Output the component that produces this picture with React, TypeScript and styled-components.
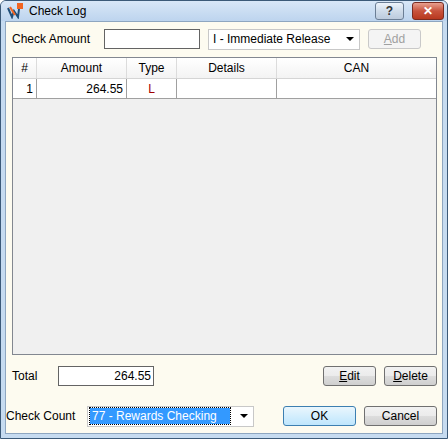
import React from "react";
import styled, { createGlobalStyle } from "styled-components";

const G = createGlobalStyle`
  body { margin: 0; font-family: "Liberation Sans", Arial, sans-serif; font-size: 12px; }
`;
const Win = styled.div`
  width: 448px; height: 439px; box-sizing: border-box;
  border: 1px solid #3c5a78; border-radius: 6px 6px 0 0;
  background: #c6dbf0; display: flex; flex-direction: column; overflow: hidden;
`;
const Title = styled.div`
  height: 25px; display: flex; align-items: center; padding: 0 3px 0 6px; gap: 6px;
  background: linear-gradient(#d8e7f7, #bdd4ee); font-size: 12px; color: #000;
`;
const Spacer = styled.div` flex: 1; `;
const TBtn = styled.div<{ red?: boolean }>`
  width: ${p => (p.red ? 32 : 29)}px; height: 18px; box-sizing: border-box;
  border: 1px solid ${p => (p.red ? "#7a2b20" : "#6b7e95")}; border-radius: 3px;
  background: ${p => (p.red ? "linear-gradient(#e8a08f,#c8533d 50%,#b8381f)" : "linear-gradient(#eef4fb,#cfdcea 50%,#bccbdd)")};
  display: flex; align-items: center; justify-content: center;
  color: ${p => (p.red ? "#fff" : "#333")}; font-weight: bold; font-size: 12px; margin-left: 2px;
`;
const Body = styled.div`
  flex: 1; margin: 0 4px 4px 4px; background: #fdfbf0; border: 1px solid #8ea6c0;
  display: flex; flex-direction: column; padding: 6px 5px 6px 0;
`;
const Row = styled.div<{ h: number }>`
  display: flex; align-items: center; height: ${p => p.h}px;
`;
const Label = styled.span<{ w: number }>` width: ${p => p.w}px; padding-left: 6px; box-sizing: border-box; font-size: 12px; `;
const Input = styled.div<{ w: number }>`
  width: ${p => p.w}px; height: 20px; box-sizing: border-box; border: 1px solid #646464; background: #fff;
  text-align: right; padding: 2px 2px 0 0; font-size: 12px;
`;
const Select = styled.div<{ w: number }>`
  width: ${p => p.w}px; height: 21px; box-sizing: border-box; border: 1px solid #c8c8c8; background: #fff;
  display: flex; align-items: center; padding: 0 5px 0 2px; font-size: 12px;
`;
const SelText = styled.span<{ sel?: boolean }>`
  flex: 1; padding: 1px 2px; ${p => p.sel && "background:#3399ff;color:#fff;outline:1px dotted #000;margin-right:10px;"}
`;
const Arrow = styled.span` width:0;height:0;border-left:4px solid transparent;border-right:4px solid transparent;border-top:4px solid #000; `;
const Btn = styled.div<{ w: number; dis?: boolean; def?: boolean }>`
  width: ${p => p.w}px; height: 20px; box-sizing: border-box; border-radius: 3px;
  border: 1px solid ${p => (p.dis ? "#c9c9c9" : p.def ? "#3c7fb1" : "#707070")};
  background: ${p => (p.dis ? "#f4f4f4" : p.def ? "linear-gradient(#eaf6fd,#bee6fd)" : "linear-gradient(#f2f2f2,#ebebeb 50%,#dddddd 51%,#cfcfcf)")};
  color: ${p => (p.dis ? "#a0a0a0" : "#000")}; display:flex;align-items:center;justify-content:center; font-size:12px;
`;
const Grid = styled.div`
  margin: 7px 0 0 6px; height: 296px; border: 1px solid #828790; background: #f0f0f0;
  display: flex; flex-direction: column;
`;
const GRow = styled.div<{ head?: boolean }>`
  display: grid; grid-template-columns: 24px 90px 50px 100px 1fr; height: ${p => (p.head ? 20 : 19)}px;
  background: ${p => (p.head ? "linear-gradient(#fff,#f3f3f3)" : "#fff")};
  border-bottom: 1px solid ${p => (p.head ? "#d5d5d5" : "#a0a0a0")};
`;
const Cell = styled.div<{ al?: string }>`
  border-right: 1px solid #a0a0a0; display:flex; align-items:center; padding: 0 3px;
  justify-content: ${p => p.al || "center"}; font-size: 12px;
`;
const HCell = styled(Cell)` border-right: 1px solid #dcdcdc; `;
const Red = styled.span` color: #a00000; `;

export default function App() {
  return (
    <Win>
      <G />
      <Title>
        <svg width="16" height="16" viewBox="0 0 16 16">
          <rect x="10" y="0" width="6" height="6" fill="#f26522" />
          <path d="M1 5 L5 14 L7 8 L11 14 L12 6" stroke="#1f4e79" strokeWidth="2" fill="none" />
          <path d="M3 4 L8 12" stroke="#f26522" strokeWidth="2" />
        </svg>
        <span>Check Log</span>
        <Spacer />
        <TBtn>?</TBtn>
        <TBtn red>✕</TBtn>
      </Title>
      <Body>
        <Row h={22}>
          <Label w={98}>Check Amount</Label>
          <Input w={96} />
          <span style={{ width: 8 }} />
          <Select w={152}><SelText>I - Immediate Release</SelText><Arrow /></Select>
          <span style={{ width: 8 }} />
          <Btn w={53} dis><u>A</u>dd</Btn>
        </Row>
        <Grid>
          <GRow head>
            <HCell>#</HCell><HCell>Amount</HCell><HCell>Type</HCell><HCell>Details</HCell><HCell style={{ borderRight: 0 }}>CAN</HCell>
          </GRow>
          <GRow>
            <Cell al="flex-end">1</Cell><Cell al="flex-end">264.55</Cell><Cell><Red>L</Red></Cell><Cell /><Cell style={{ borderRight: 0 }} />
          </GRow>
        </Grid>
        <Row h={30} style={{ marginTop: 6 }}>
          <Label w={52}>Total</Label>
          <Input w={96}>264.55</Input>
          <Spacer />
          <Btn w={53}><u>E</u>dit</Btn>
          <span style={{ width: 8 }} />
          <Btn w={53}><u>D</u>elete</Btn>
        </Row>
        <Row h={22} style={{ marginTop: 14 }}>
          <Label w={81} style={{ paddingLeft: 0 }}>Check Count</Label>
          <Select w={167}><SelText sel>77 - Rewards Checking</SelText><Arrow /></Select>
          <Spacer />
          <Btn w={73} def>OK</Btn>
          <span style={{ width: 8 }} />
          <Btn w={73}>Cancel</Btn>
        </Row>
      </Body>
    </Win>
  );
}
